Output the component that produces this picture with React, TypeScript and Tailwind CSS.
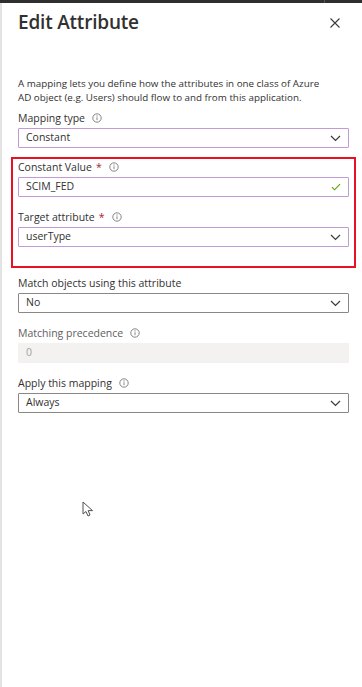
import React from "react";

const InfoIcon = () => (
  <svg width="10" height="10" viewBox="0 0 10 10" className="ml-[7px] shrink-0">
    <circle cx="5" cy="5" r="4.2" fill="none" stroke="#7a7876" strokeWidth="0.9" />
    <line x1="5" y1="4.3" x2="5" y2="7.2" stroke="#7a7876" strokeWidth="0.9" />
    <circle cx="5" cy="2.9" r="0.55" fill="#7a7876" />
  </svg>
);

const Chevron = () => (
  <svg width="11" height="7" viewBox="0 0 11 7" className="shrink-0">
    <path d="M1 1 L5.5 5.5 L10 1" fill="none" stroke="#3b3a39" strokeWidth="1.2" />
  </svg>
);

const Check = () => (
  <svg width="10" height="8" viewBox="0 0 10 8" className="shrink-0">
    <path d="M1 4.2 L3.6 6.8 L9 1.2" fill="none" stroke="#57a300" strokeWidth="1.1" />
  </svg>
);

type LabelProps = { text: string; required?: boolean; info?: boolean; muted?: boolean };

const Label = ({ text, required, info, muted }: LabelProps) => (
  <div className={`flex items-center h-[14px] text-[10.5px] leading-[14px] ${muted ? "text-[#605e5c]" : "text-[#323130]"}`}>
    <span>{text}</span>
    {required && <span className="ml-[4px] text-[#a4262c]">*</span>}
    {info && <InfoIcon />}
  </div>
);

type BoxProps = { value: string; kind: "select" | "text" | "disabled"; purple?: boolean; valid?: boolean };

const Box = ({ value, kind, purple, valid }: BoxProps) => {
  const border =
    kind === "disabled"
      ? "border-[#f3f2f1] bg-[#f3f2f1] text-[#a19f9d]"
      : purple
      ? "border-[#c19ad6] bg-white text-[#323130]"
      : "border-[#8a8886] bg-white text-[#323130]";
  return (
    <div className={`mt-[3px] h-[20px] border rounded-[1px] flex items-center justify-between pl-[7px] pr-[7px] text-[10.5px] ${border}`}>
      <span>{value}</span>
      {kind === "select" && <Chevron />}
      {valid && <Check />}
    </div>
  );
};

export default function App() {
  return (
    <div className="relative w-[362px] h-[687px] bg-white overflow-hidden" style={{ fontFamily: '"Open Sans", "Noto Sans", sans-serif' }}>
      <div className="h-[3px] bg-[#2f2f2f] flex">
        <div className="w-[324px]" />
        <div className="w-px bg-[#555]" />
      </div>
      <div className="flex h-[684px]">
        <div className="w-[2px] bg-[#e3e3e3]" />
        <div className="flex-1 pl-[16px] pr-[13px]">
          <div className="flex items-center justify-between pt-[5px] h-[32px]">
            <h1 className="text-[19px] leading-[24px] font-semibold text-[#323130] tracking-[-0.2px]">Edit Attribute</h1>
            <svg width="10" height="10" viewBox="0 0 10 10" className="mr-[9px] mt-[2px]">
              <path d="M0.5 0.5 L9.5 9.5 M9.5 0.5 L0.5 9.5" stroke="#3b3a39" strokeWidth="1.1" />
            </svg>
          </div>

          <p className="mt-[42px] text-[9.8px] leading-[14px] text-[#323130] pr-[20px]">
            A mapping lets you define how the attributes in one class of Azure AD object (e.g. Users) should flow to and from this application.
          </p>

          <div className="mt-[6px]">
            <Label text="Mapping type" info />
            <Box value="Constant" kind="select" purple />
          </div>

          <div className="-mx-[7px] mt-[9px] border-2 border-[#e81123] px-[5px] pt-[1px] pb-[19px]">
            <Label text="Constant Value" required info />
            <div className="mt-[1px]">
              <Box value="SCIM_FED" kind="text" purple valid />
            </div>
            <div className="mt-[13px]">
              <Label text="Target attribute" required info />
              <Box value="userType" kind="select" purple />
            </div>
          </div>

          <div className="mt-[8px]">
            <Label text="Match objects using this attribute" />
            <Box value="No" kind="select" />
          </div>

          <div className="mt-[13px]">
            <Label text="Matching precedence" info muted />
            <Box value="0" kind="disabled" />
          </div>

          <div className="mt-[13px]">
            <Label text="Apply this mapping" info />
            <Box value="Always" kind="select" />
          </div>
        </div>
      </div>

      <svg width="12" height="17" viewBox="0 0 12 17" className="absolute left-[82px] top-[501px]">
        <path d="M1 1 L1 13 L4 10.5 L6 15 L8 14 L6.2 9.6 L10.5 9.6 Z" fill="white" stroke="#505050" strokeWidth="1" strokeLinejoin="round" />
      </svg>
    </div>
  );
}
